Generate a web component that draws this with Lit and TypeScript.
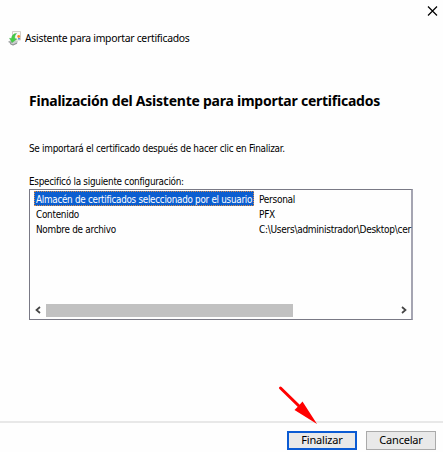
import { LitElement, html, css } from "lit";
import { customElement } from "lit/decorators.js";

@customElement("app-root")
export class AppRoot extends LitElement {
  static styles = css`
    :host { display: block; }
    * { box-sizing: border-box; }
    .window {
      position: relative; width: 443px; height: 452px; overflow: hidden;
      display: flex; flex-direction: column; background: #fefefe; color: #000;
      font: 11px/15px "DejaVu Sans Condensed", "DejaVu Sans", sans-serif;
      font-stretch: condensed; white-space: nowrap; letter-spacing: -0.3px;
    }
    .narrow { display: inline-block; transform: scaleX(.897); transform-origin: 0 50%; }
    .titlebar { height: 28px; display: flex; justify-content: flex-end; padding: 6px 5px 0 0; }
    .titlebar svg { width: 11px; height: 11px; }
    .caption { display: flex; align-items: center; height: 20px; padding-left: 7px; }
    .caption svg { width: 16px; height: 16px; margin-right: 2px; }
    .caption span {
      font: 11px/16px "Noto Sans", sans-serif; letter-spacing: -0.3px;
      transform: scaleX(.945); transform-origin: 0 50%;
    }
    .content { padding: 43px 30px 0 29px; height: 373px; }
    h1 { margin: 0; font: bold 14px/20px "Noto Sans", sans-serif; letter-spacing: -0.24px; color: #000; }
    .intro { margin: 30px 0 0; }
    .label { margin: 18px 0 0; }
    .list {
      width: 384px; height: 131px; border: 1px solid #797985; border-right: 2px solid #a5a5b2;
      display: flex; flex-direction: column; padding: 1px 0 2px 4px;
    }
    .row { display: grid; grid-template-columns: 220px 1fr; height: 15px; line-height: 17px; }
    .name { height: 15px; padding-left: 2px; }
    .value { height: 15px; padding-left: 5px; }
    .value .narrow { transform: scaleX(.91); }
    .selected .name { background: #0b5ed0; color: #fff; outline: 1px dotted #d98b45; outline-offset: -1px; }
    .selected .name .narrow { transform: scaleX(.89); }
    .scroll { margin-top: auto; height: 14px; display: flex; align-items: center; }
    .scroll svg { width: 7px; height: 8px; }
    .thumb { width: 247px; height: 13px; background: #c1c1c1; margin-left: 5px; margin-right: 107px; }
    .footer { border-top: 2px solid #e8e8e8; display: flex; gap: 9px; padding: 8px 7px 0 287px; }
    button {
      width: 71px; height: 19px; padding: 0 0 1px; background: #e9e9e9; border: 1px solid #aaa; color: #000;
      font: 11px/14px "Noto Sans", sans-serif; letter-spacing: -0.2px; border-radius: 0;
      display: flex; align-items: center; justify-content: center;
    }
    .primary { border: 2px solid #0b5bd3; }
    .arrow { position: absolute; left: 276px; top: 383px; width: 45px; height: 42px; }
  `;

  private rows = [
    ["Almacén de certificados seleccionado por el usuario", "Personal"],
    ["Contenido", "PFX"],
    ["Nombre de archivo", "C:\\Users\\administrador\\Desktop\\cer"],
  ];

  render() {
    return html`
      <div class="window">
        <div class="titlebar">
          <svg viewBox="0 0 11 11"><path d="M1 .5l9 9M10 .5l-9 9" stroke="#000" stroke-width="1.2" /></svg>
        </div>
        <div class="caption">
          <svg viewBox="0 0 16 16">
            <path d="M5.500 1.500H13.500V10H5.500z" fill="#faf8f4" stroke="#d3cfc8" />
            <path d="M2 11l3-1 6 1-1 3-4 1.500-3-1.500z" fill="#c9cccd" />
            <path d="M1.500 11.800l3 .6M3 13.500l3 1.500 4-2" fill="none" stroke="#878b8c" />
            <path d="M9.500 3.500C6.500 3.500 4.800 5.500 4.500 8.500L2.500 8.300l2.600 4.200 4.700-3.500-2-.4C7.500 6.500 8 5 9.500 3.500z" fill="#45cf45" stroke="#2fa63a" stroke-width=".4" />
            <circle cx="11.700" cy="6.500" r="1.400" fill="#f58b25" />
            <path d="M11 8h2v1.600h-2z" fill="#5a8de0" />
          </svg>
          <span>Asistente para importar certificados</span>
        </div>
        <div class="content">
          <h1>Finalización del Asistente para importar certificados</h1>
          <p class="intro"><span class="narrow">Se importará el certificado después de hacer clic en Finalizar.</span></p>
          <p class="label"><span class="narrow">Especificó la siguiente configuración:</span></p>
          <div class="list">
            ${this.rows.map(([name, value], i) => html`
              <div class="row ${i === 0 ? "selected" : ""}">
                <div class="name"><span class="narrow">${name}</span></div>
                <div class="value"><span class="narrow">${value}</span></div>
              </div>`)}
            <div class="scroll">
              <svg viewBox="0 0 7 8"><path d="M6 1L2.500 4 6 7" fill="none" stroke="#444" stroke-width="1.7" /></svg>
              <div class="thumb"></div>
              <svg viewBox="0 0 7 8"><path d="M2 1l3.500 3L2 7" fill="none" stroke="#444" stroke-width="1.7" /></svg>
            </div>
          </div>
        </div>
        <div class="footer">
          <button class="primary"><span>Finalizar</span></button>
          <button><span>Cancelar</span></button>
        </div>
        <svg class="arrow" viewBox="0 0 45 42">
          <path d="M4.500 5L25 25" stroke="#f00" stroke-width="3" stroke-linecap="round" />
          <path d="M26.500 18.500L41 41 18.500 27 22.500 23z" fill="#f00" />
        </svg>
      </div>
    `;
  }
}
